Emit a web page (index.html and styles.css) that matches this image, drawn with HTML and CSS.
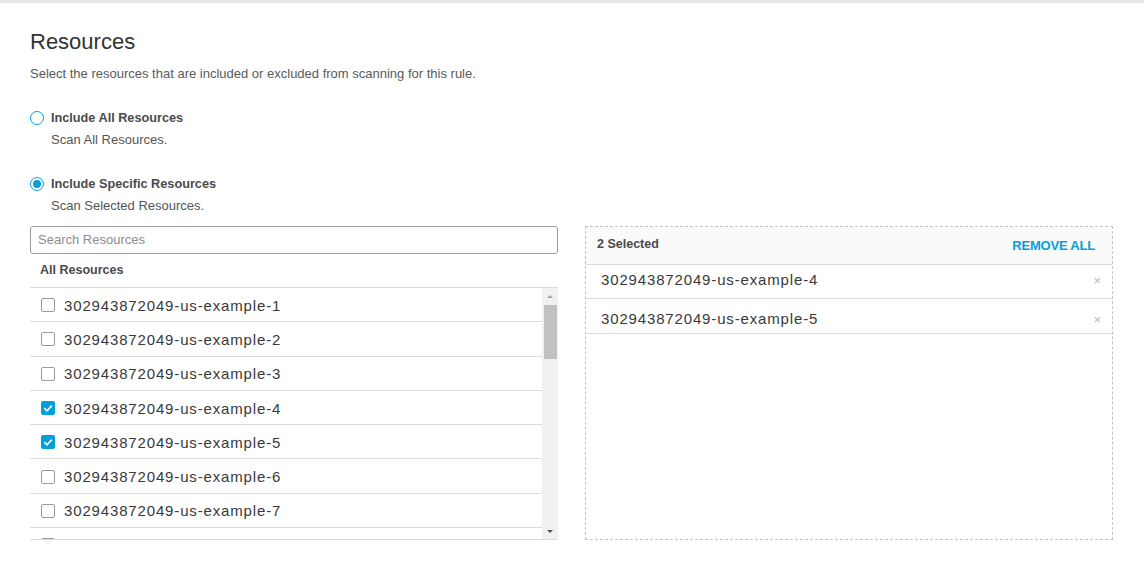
FILE: index.html
```html
<!DOCTYPE html>
<html>
<head>
<meta charset="utf-8">
<link rel="stylesheet" href="styles.css">
</head>
<body>
<div class="topbar"></div>
<div class="page">
  <h1 class="title">Resources</h1>
  <p class="subtitle">Select the resources that are included or excluded from scanning for this rule.</p>

  <div class="option first">
    <div class="option-label"><span class="radio"></span>Include All Resources</div>
    <div class="option-desc">Scan All Resources.</div>
  </div>
  <div class="option">
    <div class="option-label"><span class="radio checked"></span>Include Specific Resources</div>
    <div class="option-desc">Scan Selected Resources.</div>
  </div>

  <div class="columns">
    <div class="col-left">
      <div class="search">Search Resources</div>
      <div class="list-head">All Resources</div>
      <div class="list">
        <div class="rows">
          <div class="row"><span class="cb"></span><span class="rtext">302943872049-us-example-1</span></div>
          <div class="row"><span class="cb"></span><span class="rtext">302943872049-us-example-2</span></div>
          <div class="row"><span class="cb"></span><span class="rtext">302943872049-us-example-3</span></div>
          <div class="row"><span class="cb checked"><svg viewBox="0 0 14 14" width="14" height="14"><path d="M3.3 7.2 L6 9.8 L10.8 4.6" fill="none" stroke="#fff" stroke-width="1.6"/></svg></span><span class="rtext">302943872049-us-example-4</span></div>
          <div class="row"><span class="cb checked"><svg viewBox="0 0 14 14" width="14" height="14"><path d="M3.3 7.2 L6 9.8 L10.8 4.6" fill="none" stroke="#fff" stroke-width="1.6"/></svg></span><span class="rtext">302943872049-us-example-5</span></div>
          <div class="row"><span class="cb"></span><span class="rtext">302943872049-us-example-6</span></div>
          <div class="row"><span class="cb"></span><span class="rtext">302943872049-us-example-7</span></div>
          <div class="row"><span class="cb"></span><span class="rtext">302952802291-us-example-application-cell</span></div>
        </div>
        <div class="scrollbar">
          <div class="sb-btn"><svg viewBox="0 0 16 16" width="16" height="16"><path d="M5 10 L8 7 L11 10 Z" fill="#a3a3a3"/></svg></div>
          <div class="sb-track"><div class="sb-thumb"></div></div>
          <div class="sb-btn"><svg viewBox="0 0 16 16" width="16" height="16"><path d="M5 7 L11 7 L8 10 Z" fill="#505050"/></svg></div>
        </div>
      </div>
    </div>

    <div class="col-right">
      <div class="sel-head">
        <span class="sel-count">2 Selected</span>
        <span class="remove-all">REMOVE ALL</span>
      </div>
      <div class="sel-row r1"><span class="stext">302943872049-us-example-4</span><span class="x">&#215;</span></div>
      <div class="sel-row r2"><span class="stext">302943872049-us-example-5</span><span class="x">&#215;</span></div>
    </div>
  </div>
</div>
</body>
</html>
```

FILE: styles.css
```css
* { box-sizing: border-box; }
html, body {
  margin: 0;
  padding: 0;
  background: #fff;
  font-family: "Liberation Sans", Arial, sans-serif;
  color: #39393b;
}
.topbar {
  height: 3px;
  background: #e8e8e8;
}
.page {
  padding: 26px 31px 0 30px;
}
.title {
  margin: 0;
  font-size: 22px;
  line-height: 26px;
  font-weight: normal;
  color: #333;
}
.subtitle {
  margin: 11px 0 0;
  font-size: 13px;
  line-height: 16px;
  color: #5a5a5a;
}
.option {
  margin-top: 27px;
}
.option-label {
  display: flex;
  align-items: center;
  height: 18px;
  font-size: 12.7px;
  font-weight: bold;
  color: #4a4a4a;
}
.radio {
  width: 14px;
  height: 14px;
  border: 1px solid #049fd9;
  border-radius: 50%;
  margin-right: 7px;
  flex: none;
  display: flex;
  align-items: center;
  justify-content: center;
}
.radio.checked::after {
  content: "";
  width: 8px;
  height: 8px;
  border-radius: 50%;
  background: #049fd9;
}
.option-desc {
  margin-top: 5px;
  padding-left: 21px;
  font-size: 13px;
  line-height: 16px;
  color: #555;
}
.columns {
  margin-top: 12px;
  display: grid;
  grid-template-columns: 528px 528px;
  column-gap: 27px;
}
.search {
  height: 28px;
  border: 1px solid #9a9a9a;
  border-radius: 3px;
  padding: 0 8px 0 7px;
  font-size: 13px;
  line-height: 26px;
  color: #8d8d8d;
}
.list-head {
  height: 33px;
  padding: 8px 0 0 10px;
  font-size: 12.5px;
  line-height: 16px;
  font-weight: bold;
  color: #4a4a4a;
}
.list {
  height: 253px;
  display: flex;
  border-top: 1px solid #dcdcdc;
  border-bottom: 1px solid #dcdcdc;
  overflow: hidden;
}
.rows {
  flex: 1;
  overflow: hidden;
}
.row {
  height: 34.3px;
  display: flex;
  align-items: center;
  border-bottom: 1px solid #dcdcdc;
  padding-left: 11px;
  padding-top: 1px;
  white-space: nowrap;
}
.cb {
  width: 14px;
  height: 14px;
  border: 1.5px solid #9b9b9b;
  border-radius: 2px;
  margin-right: 9px;
  flex: none;
  display: flex;
}
.cb.checked {
  border: none;
  background: #049fd9;
}
.rtext {
  font-size: 15px;
  letter-spacing: 0.85px;
  color: #39393b;
}
.scrollbar {
  width: 16px;
  flex: none;
  background: #f1f1f1;
  display: flex;
  flex-direction: column;
}
.sb-btn {
  height: 16px;
  flex: none;
}
.sb-btn svg { display: block; }
.sb-track {
  flex: 1;
  padding: 1px 1px 0 2px;
}
.sb-thumb {
  height: 54px;
  background: #c1c1c1;
}
.col-right {
  height: 314px;
  border: 1px dashed #c4c4c4;
}
.sel-head {
  height: 38px;
  background: #fafafa;
  border-bottom: 1px solid #dcdcdc;
  display: flex;
  align-items: center;
  justify-content: space-between;
  padding: 0 17px 0 11px;
}
.sel-count {
  font-size: 12.5px;
  font-weight: bold;
  color: #4a4a4a;
  margin-top: -3px;
}
.remove-all {
  font-size: 13px;
  font-weight: bold;
  color: #049fd9;
  letter-spacing: -0.2px;
}
.sel-row {
  display: flex;
  align-items: center;
  justify-content: space-between;
  border-bottom: 1px solid #dcdcdc;
  padding: 0 11px 0 15px;
}
.sel-row.r1 { height: 34px; padding-bottom: 4px; }
.sel-row.r2 { height: 35px; padding-top: 5px; }
.stext {
  font-size: 15px;
  letter-spacing: 0.85px;
  color: #39393b;
}
.x {
  font-size: 13px;
  color: #b5b5b5;
  margin-top: 2px;
}
```
